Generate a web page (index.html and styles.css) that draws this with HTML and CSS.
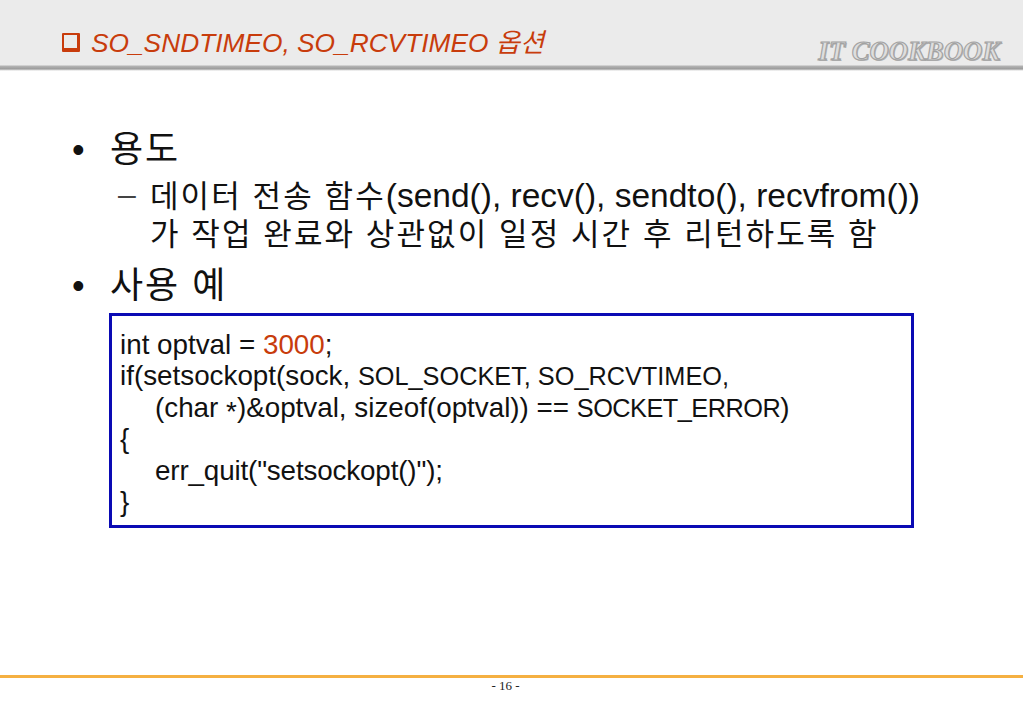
FILE: index.html
```html
<!DOCTYPE html>
<html lang="ko">
<head>
<meta charset="utf-8">
<title>SO_SNDTIMEO, SO_RCVTIMEO 옵션</title>
<link rel="stylesheet" href="styles.css">
</head>
<body>
<div class="slide">
  <header class="header">
    <h1 class="title">
      <svg class="box-icon" viewBox="0 0 18 19" width="18" height="19" aria-hidden="true">
        <path d="M1 0H17Q18 0 18 1V18Q18 19 17 19H1Q0 19 0 18V1Q0 0 1 0Z M2 2V15H15V2Z" fill="#c83c0c" fill-rule="evenodd"/>
      </svg>
      <span>SO_SNDTIMEO, SO_RCVTIMEO 옵션</span>
    </h1>
    <div class="brand">IT COOKBOOK</div>
  </header>
  <main class="content">
    <div class="bullet"><span class="dot">•</span><span>용도</span></div>
    <div class="sub">
      <span class="dash">–</span>
      <p><span class="ko">데이터 전송 함수</span>(send(), recv(), sendto(), recvfrom())<br><span class="ko">가 작업 완료와 상관없이 일정 시간 후 리턴하도록 함</span></p>
    </div>
    <div class="bullet second"><span class="dot">•</span><span>사용 예</span></div>
    <div class="code">
      <div>int optval = <span class="num">3000</span>;</div>
      <div>if(setsockopt(sock, <span class="caps">SOL_SOCKET, SO_RCVTIMEO,</span></div>
      <div class="indent">(char <span class="star">*</span>)&amp;optval, sizeof(optval)) == <span class="caps tight">SOCKET_ERROR</span>)</div>
      <div>{</div>
      <div class="indent quit">err_quit("setsockopt()");</div>
      <div>}</div>
    </div>
  </main>
  <footer class="footer">- 16 -</footer>
</div>
</body>
</html>
```

FILE: styles.css
```css
* { box-sizing: border-box; }
html, body { margin: 0; padding: 0; background: #fff; }
body { font-family: "Liberation Sans", "Noto Sans CJK KR", sans-serif; color: #111; }
.slide { width: 1023px; height: 708px; display: flex; flex-direction: column; overflow: hidden; }
.header {
  height: 71px;
  flex: none;
  display: flex;
  justify-content: space-between;
  background: linear-gradient(#ebebeb, #ebebeb 65px, #b4b4b4 66px, #9a9a9a 69px, #d8d8d8 70px, #fff 71px);
  padding: 0 23px 0 62px;
}
.title {
  margin: 0;
  padding-top: 27px;
  display: flex;
  align-items: flex-start;
  gap: 11px;
  font-size: 26.3px;
  line-height: 32px;
  font-weight: normal;
  font-style: italic;
  color: #c83c0c;
}
.box-icon { margin-top: 6px; flex: none; }
.brand {
  padding-top: 36px;
  font-family: "Liberation Serif", serif;
  font-weight: bold;
  font-style: italic;
  font-size: 26.7px;
  line-height: 30px;
  color: #dedede;
  -webkit-text-stroke: 1.1px #a2a2a2;
  text-shadow: 1px 1px 0 #b4b4b4;
}
.content { flex: 1; padding: 58px 0 0 72px; }
.bullet { display: flex; font-size: 36px; line-height: 42px; letter-spacing: 2px; color: #111; }
.dot { width: 38px; font-size: 36px; letter-spacing: 0; }
.sub { display: flex; font-size: 33.5px; line-height: 37px; margin-top: 6px; margin-left: 46px; }
.dash { width: 32px; font-size: 32px; line-height: 35px; color: #444; }
.sub p { margin: 0; }
.ko { font-size: 31px; letter-spacing: 2.1px; }
.second { margin-top: 12px; }
.code {
  width: 805px;
  height: 215px;
  margin: 6px 0 0 37px;
  padding: 13px 8px 0;
  border: 3px solid #0a0ab4;
  font-size: 27.8px;
  line-height: 31.4px;
}
.caps { font-size: 25.3px; line-height: 1; }
.tight { letter-spacing: -0.5px; }
.star { vertical-align: -4px; line-height: 0; }
.indent { padding-left: 35px; }
.quit { letter-spacing: -0.15px; }
.num { color: #c83c0c; }
.footer {
  flex: none;
  height: 33px;
  border-top: 3px solid #f5b041;
  text-align: center;
  font-family: "Liberation Serif", serif;
  font-size: 13px;
  line-height: 15px;
  padding-right: 12px;
  color: #222;
}
```
